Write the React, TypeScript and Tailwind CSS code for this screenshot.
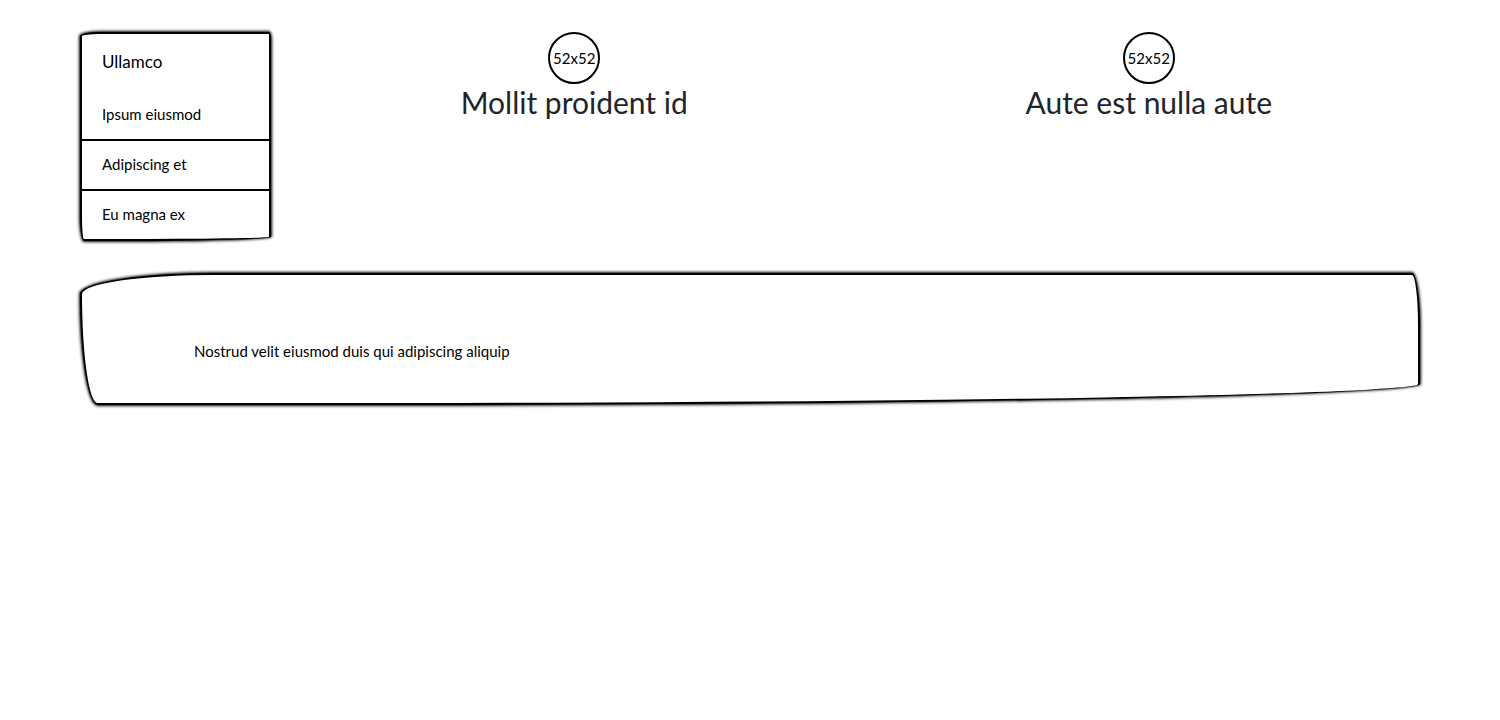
const menuItems = ['Ipsum eiusmod', 'Adipiscing et', 'Eu magna ex'];
const features = ['Mollit proident id', 'Aute est nulla aute'];

function SideMenu() {
  return (
    <nav
      aria-label="Ullamco"
      className="w-[191px] shrink-0 overflow-hidden rounded-[10%_1%_80%_2%/2%_4%_2%_12%] border-2 border-black bg-white shadow-[0_0_3px_1px_black]"
    >
      <h2 className="px-5 pt-[14px] pb-[15px] text-[17px] leading-7">Ullamco</h2>
      <ul className="divide-y-2 divide-black">
        {menuItems.map((item) => (
          <li key={item}>
            <a href="#" className="block px-5 pt-[11px] pb-[13px] text-[15px] leading-6">
              {item}
            </a>
          </li>
        ))}
      </ul>
    </nav>
  );
}

function Feature({ title }: { title: string }) {
  return (
    <section className="flex flex-1 flex-col items-center px-4">
      <div className="flex size-[52px] items-center justify-center rounded-full border-2 border-black text-[15px] leading-6">
        52x52
      </div>
      <h2 className="text-[30px] leading-9 text-[#212529]">{title}</h2>
    </section>
  );
}

export default function App() {
  return (
    <main className="flex flex-col gap-8 bg-white px-20 py-8 font-[Lato,sans-serif] text-black">
      <div className="-mr-4 flex items-start">
        <SideMenu />
        <div className="ml-4 flex flex-1">
          {features.map((title) => (
            <Feature key={title} title={title} />
          ))}
        </div>
      </div>
      <div className="rounded-[10%_0.6%_80%_1.3%/16%_40%_16%_84%] border-2 border-black bg-white px-28 pt-16 pb-10 shadow-[0_0_3px_1px_black]">
        <p className="text-[15px] leading-6">Nostrud velit eiusmod duis qui adipiscing aliquip</p>
      </div>
    </main>
  );
}
